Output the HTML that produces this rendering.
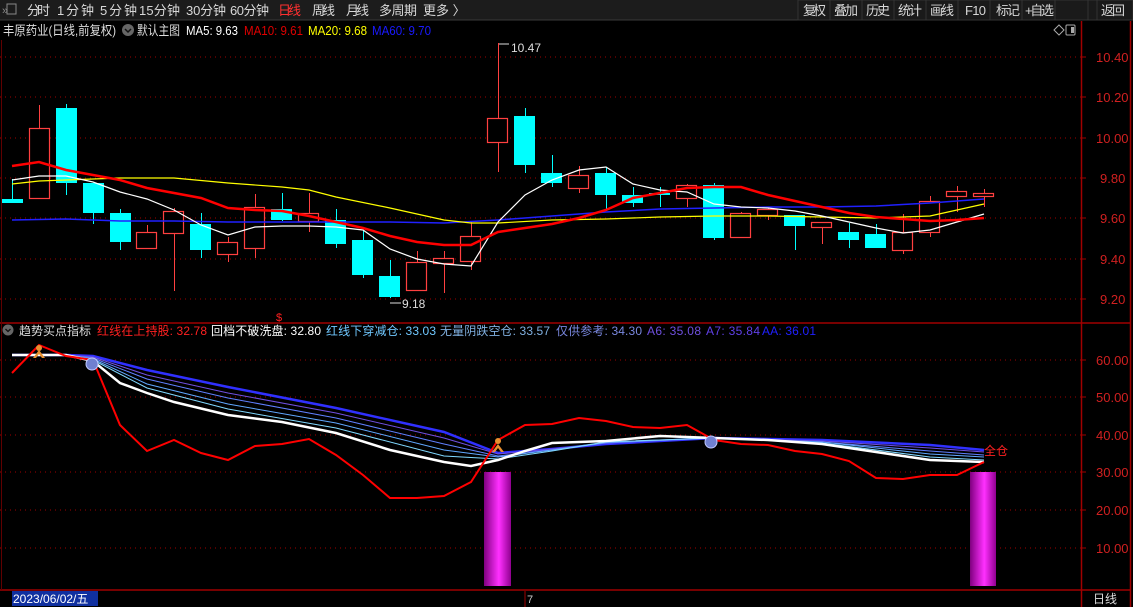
<!DOCTYPE html>
<html><head><meta charset="utf-8"><style>
body{margin:0;width:1133px;height:607px;background:#000;overflow:hidden;font-family:"Liberation Sans","Noto Sans CJK SC",sans-serif;}
svg{position:absolute;left:0;top:0}
</style></head><body>
<svg width="1133" height="607" xmlns="http://www.w3.org/2000/svg" font-family="Liberation Sans, Noto Sans CJK SC, sans-serif">
<rect x="0" y="0" width="1133" height="20" fill="#1c1c1c"/>
<line x1="0" y1="20" x2="1133" y2="20" stroke="#3a3a3a"/>
<g fill="#1a1a1a" stroke="#333"><rect x="798" y="0" width="335" height="20"/></g>
<g stroke="#333"><line x1="798" y1="0" x2="798" y2="20"/><line x1="830" y1="0" x2="830" y2="20"/><line x1="862" y1="0" x2="862" y2="20"/><line x1="894" y1="0" x2="894" y2="20"/><line x1="926" y1="0" x2="926" y2="20"/><line x1="958" y1="0" x2="958" y2="20"/><line x1="990" y1="0" x2="990" y2="20"/><line x1="1022" y1="0" x2="1022" y2="20"/><line x1="1055" y1="0" x2="1055" y2="20"/><line x1="1088" y1="0" x2="1088" y2="20"/><line x1="1097" y1="0" x2="1097" y2="20"/></g>
<text x="2" y="14" font-size="11" fill="#888">»</text><rect x="7" y="4" width="9" height="10" fill="none" stroke="#888"/>
<g font-size="13" fill="#d8d8d8" lengthAdjust="spacingAndGlyphs">
<text x="27" y="15" textLength="23">分时</text><text x="57" y="15" textLength="37">1分钟</text><text x="100" y="15" textLength="37">5分钟</text><text x="139" y="15" textLength="41">15分钟</text><text x="186" y="15" textLength="40">30分钟</text><text x="230" y="15" textLength="39">60分钟</text>
<text x="278" y="15" fill="#ff3030" textLength="23">日线</text><text x="312" y="15" textLength="23">周线</text><text x="346" y="15" textLength="23">月线</text><text x="379" y="15" textLength="38">多周期</text><text x="423" y="15">更多 〉</text>
<text x="803" y="15" textLength="23">复权</text><text x="834" y="15" textLength="24">叠加</text><text x="866" y="15" textLength="24">历史</text><text x="898" y="15" textLength="24">统计</text><text x="930" y="15" textLength="24">画线</text><text x="965" y="15" textLength="21">F10</text><text x="996" y="15" textLength="24">标记</text><text x="1025" y="15" textLength="29">+自选</text><text x="1060" y="15" textLength="0"></text><text x="1101" y="15" textLength="24">返回</text>
</g>
<g font-size="13">
<text x="3" y="35" fill="#ddd" textLength="113" lengthAdjust="spacingAndGlyphs">丰原药业(日线,前复权)</text>
<circle cx="128" cy="30" r="6" fill="#666"/><path d="M125 29l3 3 3-3" stroke="#111" stroke-width="1.5" fill="none"/>
<text x="137" y="35" fill="#ddd" textLength="43" lengthAdjust="spacingAndGlyphs">默认主图</text>
<text x="186" y="35" fill="#fff" textLength="52" lengthAdjust="spacingAndGlyphs">MA5: 9.63</text>
<text x="244" y="35" fill="#e00000" textLength="59" lengthAdjust="spacingAndGlyphs">MA10: 9.61</text>
<text x="308" y="35" fill="#ffff00" textLength="59" lengthAdjust="spacingAndGlyphs">MA20: 9.68</text>
<text x="372" y="35" fill="#1a1aff" textLength="59" lengthAdjust="spacingAndGlyphs">MA60: 9.70</text>
</g>
<path d="M1054 30l5-5 5 5-5 5z" fill="none" stroke="#aaa"/><rect x="1066" y="25" width="9" height="10" rx="1" fill="none" stroke="#aaa"/><rect x="1071" y="27" width="3" height="6" fill="#aaa"/>
<g stroke="#a00000" stroke-width="1.5" fill="none">
<line x1="1081.5" y1="21" x2="1081.5" y2="607"/><line x1="1130.5" y1="21" x2="1130.5" y2="607"/>
<line x1="0" y1="323" x2="1131" y2="323"/><line x1="0" y1="590" x2="1131" y2="590"/>
</g>
<line x1="1.5" y1="40" x2="1.5" y2="590" stroke="#600000"/>
<g stroke="#a00000" stroke-dasharray="1 4">
<line x1="0" y1="57" x2="1081" y2="57"/><line x1="0" y1="97" x2="1081" y2="97"/><line x1="0" y1="138" x2="1081" y2="138"/><line x1="0" y1="178" x2="1081" y2="178"/><line x1="0" y1="218" x2="1081" y2="218"/><line x1="0" y1="259" x2="1081" y2="259"/><line x1="0" y1="299" x2="1081" y2="299"/>
<line x1="0" y1="360" x2="1081" y2="360"/><line x1="0" y1="397" x2="1081" y2="397"/><line x1="0" y1="435" x2="1081" y2="435"/><line x1="0" y1="472" x2="1081" y2="472"/><line x1="0" y1="510" x2="1081" y2="510"/><line x1="0" y1="548" x2="1081" y2="548"/>
</g>
<g font-size="13" fill="#d02020">
<text x="1096" y="62">10.40</text><text x="1096" y="102">10.20</text><text x="1096" y="143">10.00</text><text x="1100" y="183">9.80</text><text x="1100" y="223">9.60</text><text x="1100" y="264">9.40</text><text x="1100" y="304">9.20</text>
<text x="1096" y="365">60.00</text><text x="1096" y="402">50.00</text><text x="1096" y="440">40.00</text><text x="1096" y="477">30.00</text><text x="1096" y="515">20.00</text><text x="1096" y="553">10.00</text>
</g>
<g stroke="#a00000"><line x1="1081" y1="57" x2="1086" y2="57"/><line x1="1081" y1="97" x2="1086" y2="97"/><line x1="1081" y1="138" x2="1086" y2="138"/><line x1="1081" y1="178" x2="1086" y2="178"/><line x1="1081" y1="218" x2="1086" y2="218"/><line x1="1081" y1="259" x2="1086" y2="259"/><line x1="1081" y1="299" x2="1086" y2="299"/><line x1="1081" y1="360" x2="1086" y2="360"/><line x1="1081" y1="397" x2="1086" y2="397"/><line x1="1081" y1="435" x2="1086" y2="435"/><line x1="1081" y1="472" x2="1086" y2="472"/><line x1="1081" y1="510" x2="1086" y2="510"/><line x1="1081" y1="548" x2="1086" y2="548"/></g>
<g stroke="#00ffff" stroke-width="1">
<line x1="12.5" y1="179" x2="12.5" y2="200"/><line x1="66.5" y1="104" x2="66.5" y2="195"/><line x1="93.5" y1="183" x2="93.5" y2="224"/><line x1="120.5" y1="209" x2="120.5" y2="250"/><line x1="201.5" y1="213" x2="201.5" y2="258"/><line x1="282.5" y1="193" x2="282.5" y2="221"/><line x1="336.5" y1="209" x2="336.5" y2="248"/><line x1="363.5" y1="230" x2="363.5" y2="278"/><line x1="390.5" y1="260" x2="390.5" y2="298"/><line x1="525.5" y1="108" x2="525.5" y2="173"/><line x1="552.5" y1="155" x2="552.5" y2="187"/><line x1="606.5" y1="167" x2="606.5" y2="211"/><line x1="633.5" y1="187" x2="633.5" y2="207"/><line x1="660.5" y1="187" x2="660.5" y2="207"/><line x1="714.5" y1="183" x2="714.5" y2="240"/><line x1="795.5" y1="215" x2="795.5" y2="250"/><line x1="849.5" y1="223" x2="849.5" y2="248"/><line x1="876.5" y1="224" x2="876.5" y2="248"/>
</g>
<g stroke="#ff4040" stroke-width="1">
<line x1="39.5" y1="105" x2="39.5" y2="199"/><line x1="147.5" y1="225" x2="147.5" y2="248"/><line x1="174.5" y1="208" x2="174.5" y2="291"/><line x1="228.5" y1="237" x2="228.5" y2="262"/><line x1="255.5" y1="194" x2="255.5" y2="258"/><line x1="309.5" y1="193" x2="309.5" y2="232"/><line x1="417.5" y1="251" x2="417.5" y2="291"/><line x1="444.5" y1="251" x2="444.5" y2="293"/><line x1="471.5" y1="222" x2="471.5" y2="270"/><line x1="498.5" y1="43" x2="498.5" y2="172"/><line x1="579.5" y1="166" x2="579.5" y2="193"/><line x1="687.5" y1="184" x2="687.5" y2="207"/><line x1="741.5" y1="212" x2="741.5" y2="237"/><line x1="768.5" y1="208" x2="768.5" y2="220"/><line x1="822.5" y1="222" x2="822.5" y2="244"/><line x1="903.5" y1="214" x2="903.5" y2="254"/><line x1="930.5" y1="196" x2="930.5" y2="237"/><line x1="957.5" y1="186" x2="957.5" y2="212"/><line x1="984.5" y1="189" x2="984.5" y2="207"/>
</g>
<g fill="#00ffff">
<rect x="2" y="199" width="21" height="4"/><rect x="56" y="108" width="21" height="75"/><rect x="83" y="183" width="21" height="30"/><rect x="110" y="213" width="21" height="29"/><rect x="190" y="224" width="21" height="26"/><rect x="271" y="209" width="21" height="11"/><rect x="325" y="220" width="21" height="24"/><rect x="352" y="240" width="21" height="35"/><rect x="379" y="276" width="21" height="21"/><rect x="514" y="116" width="21" height="49"/><rect x="541" y="173" width="21" height="10"/><rect x="595" y="173" width="21" height="22"/><rect x="622" y="195" width="21" height="8"/><rect x="649" y="193" width="21" height="2"/><rect x="703" y="185" width="21" height="53"/><rect x="784" y="215" width="21" height="11"/><rect x="838" y="232" width="21" height="8"/><rect x="865" y="234" width="21" height="14"/>
</g>
<g fill="#000" stroke="#ff4040" stroke-width="1.2">
<rect x="29.5" y="128.5" width="20" height="70"/><rect x="136.5" y="232.5" width="20" height="16"/><rect x="163.5" y="211.5" width="20" height="22"/><rect x="217.5" y="242.5" width="20" height="12"/><rect x="244.5" y="207.5" width="20" height="41"/><rect x="298.5" y="213.5" width="20" height="8"/><rect x="406.5" y="262.5" width="20" height="28"/><rect x="433.5" y="258.5" width="20" height="5"/><rect x="460.5" y="236.5" width="20" height="25"/><rect x="487.5" y="118.5" width="20" height="24"/><rect x="568.5" y="175.5" width="20" height="13"/><rect x="676.5" y="185.5" width="20" height="13"/><rect x="730.5" y="213.5" width="20" height="24"/><rect x="757.5" y="209.5" width="20" height="6"/><rect x="811.5" y="222.5" width="20" height="5"/><rect x="892.5" y="232.5" width="20" height="18"/><rect x="919.5" y="201.5" width="20" height="31"/><rect x="946.5" y="191.5" width="20" height="5"/><rect x="973.5" y="193.5" width="20" height="3"/>
</g>
<polyline fill="none" stroke="#2020ff" stroke-width="1.5" points="12,220 66,219 120,221 174,221 228,222 282,222 336,222 390,222 444,223 498,220 552,216 606,212 660,209 714,208 768,207 822,207 876,206 930,203 984,199"/>
<polyline fill="none" stroke="#ffff00" stroke-width="1.2" points="12,184 39,181 66,180 120,178 174,178 228,183 282,187 309,190 336,197 390,208 444,220 471,223 498,223 552,220 606,219 660,217 714,216 768,216 822,217 876,218 930,216 957,210 984,204"/>
<polyline fill="none" stroke="#ffffff" stroke-width="1.2" points="12,180 39,176 66,176 93,182 120,192 147,199 174,210 201,225 228,235 255,227 282,226 309,226 336,227 363,230 390,249 417,259 444,264 471,266 498,222 525,195 552,180 579,170 606,167 633,184 660,190 687,192 714,204 741,207 768,208 795,211 822,216 849,222 876,228 903,233 930,230 957,222 984,214"/>
<polyline fill="none" stroke="#ff0000" stroke-width="2.5" points="12,166 39,162 66,170 120,180 147,188 201,198 228,208 255,210 282,211 309,216 336,222 363,228 390,236 417,242 444,245 471,245 498,232 525,228 552,224 579,218 606,210 633,198 660,193 687,188 714,187 741,187 768,195 795,201 822,207 849,213 876,217 903,219 930,221 957,220 984,218"/>
<g font-size="12" fill="#ddd"><text x="511" y="52">10.47</text><text x="402" y="308">9.18</text></g>
<path d="M499 44h10M390 303h11" stroke="#ddd"/>
<text x="276" y="321" font-size="11" fill="#ff2020">$</text>
<g font-size="12" lengthAdjust="spacingAndGlyphs">
<circle cx="8" cy="330" r="5.5" fill="#666"/><path d="M5.5 329l2.5 2.5 2.5-2.5" stroke="#111" stroke-width="1.3" fill="none"/>
<text x="19" y="335" fill="#ddd" textLength="72">趋势买点指标</text>
<text x="97" y="335" fill="#ff2020" textLength="110">红线在上持股: 32.78</text>
<text x="211" y="335" fill="#fff" textLength="110">回档不破洗盘: 32.80</text>
<text x="326" y="335" fill="#70c8ff" textLength="110">红线下穿减仓: 33.03</text>
<text x="440" y="335" fill="#80b0e0" textLength="110">无量阴跌空仓: 33.57</text>
<text x="556" y="335" fill="#7a88e0" textLength="86">仅供参考: 34.30</text>
<text x="647" y="335" fill="#7050e0" textLength="54">A6: 35.08</text>
<text x="706" y="335" fill="#6040e8" textLength="54">A7: 35.84</text>
<text x="762" y="335" fill="#2020ff" textLength="54">AA: 36.01</text>
</g>
<defs><linearGradient id="mg" x1="0" x2="1"><stop offset="0" stop-color="#800080"/><stop offset="0.55" stop-color="#ff30ff"/><stop offset="1" stop-color="#900090"/></linearGradient></defs>
<rect x="484" y="472" width="27" height="114" fill="url(#mg)"/><rect x="970" y="472" width="26" height="114" fill="url(#mg)"/>
<polyline fill="none" stroke="#3030ff" stroke-width="2.5" points="12,355 66,355 93,356 147,370 228,387 336,408 444,432 498,453 552,449 606,444 714,438 822,440 930,445 984,450"/>
<polyline fill="none" stroke="#7050e0" stroke-width="1" points="12,355 66,355 93,357 147,375 228,393 336,413 444,438 498,454 552,449 606,443 714,438 822,441 930,448 984,452"/>
<polyline fill="none" stroke="#6080ff" stroke-width="1" points="12,355 66,355 93,358 147,379 228,398 336,418 444,444 498,456 552,450 606,443 714,438 822,442 930,451 984,455"/>
<polyline fill="none" stroke="#60a8ff" stroke-width="1" points="12,355 66,355 93,359 147,384 228,404 336,423 444,450 498,457 552,450 606,442 714,438 822,442 930,454 984,457"/>
<polyline fill="none" stroke="#80d8ff" stroke-width="1" points="12,355 66,355 93,360 147,388 228,409 336,428 444,456 498,459 552,451 606,442 714,438 822,443 930,457 984,460"/>
<polyline fill="none" stroke="#ffffff" stroke-width="2.5" points="12,355 66,355 93,361 120,383 147,393 174,402 228,415 282,422 336,433 390,450 444,462 471,466 498,460 525,451 552,443 606,441 660,436 714,438 768,440 822,444 876,452 930,460 984,462"/>
<polyline fill="none" stroke="#ff0000" stroke-width="2" points="12,373 39,345 66,356 93,360 120,425 147,451 174,440 201,453 228,460 255,446 282,444 309,439 336,455 363,475 390,498 417,498 444,496 471,482 498,440 525,425 552,424 579,418 606,421 633,427 660,428 687,425 714,440 741,444 768,445 795,451 822,454 849,461 876,478 903,479 930,475 957,475 984,462"/>
<g fill="#e89030"><circle cx="39" cy="348" r="3"/><path d="M33 358l6-8 6 8-3 0-3-4-3 4z"/><circle cx="498" cy="441" r="3"/><path d="M492 452l6-8 6 8-3 0-3-4-3 4z"/></g>
<circle cx="92" cy="364" r="6" fill="#7080d0" stroke="#c0c8ff"/><circle cx="711" cy="442" r="6" fill="#7080d0" stroke="#c0c8ff"/>
<text x="984" y="455" font-size="12" fill="#ff2020">全仓</text>
<rect x="12" y="591" width="86" height="15" fill="#1030a0"/>
<text x="13" y="603" font-size="12" fill="#fff">2023/06/02/五</text>
<line x1="525" y1="591" x2="525" y2="607" stroke="#a00000"/>
<text x="527" y="603" font-size="11" fill="#ccc">7</text>
<text x="1093" y="603" font-size="12" fill="#ddd">日线</text>
</svg>
</body></html>
